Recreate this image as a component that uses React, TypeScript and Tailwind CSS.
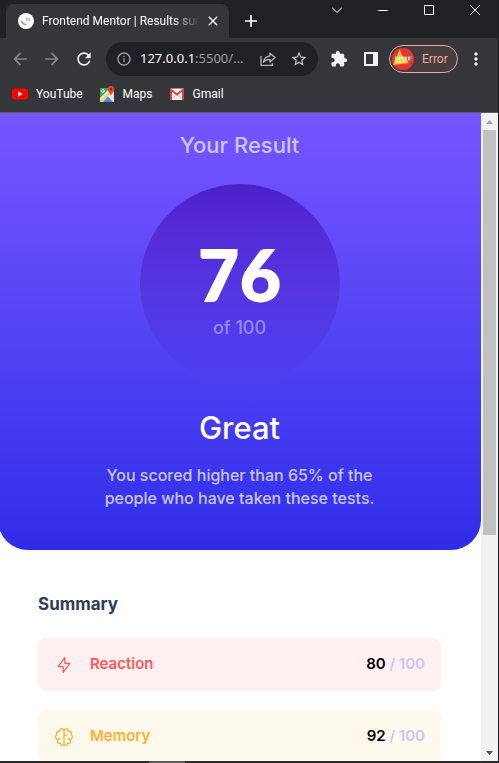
import type { ReactNode } from "react";
import {
  MdAdd,
  MdArrowBack,
  MdArrowForward,
  MdClose,
  MdExtension,
  MdInfoOutline,
  MdMoreVert,
  MdRefresh,
  MdStarBorder,
} from "react-icons/md";

function TabFavicon() {
  return (
    <svg viewBox="0 0 16 16" className="size-4 shrink-0" aria-hidden="true">
      <circle cx="8" cy="8" r="8" fill="#fff" />
      <path d="M3.500 7.500c.6 2.600 2.400 4 5 3.800" fill="none" stroke="#8d92c8" strokeWidth="1.200" />
      <path d="M8.500 4.500v3.600M12 5 9.500 6.500 12 8" fill="none" stroke="#8cc6d6" strokeWidth="1" />
    </svg>
  );
}

function WindowControls() {
  return (
    <div className="ml-auto flex h-5 text-white">
      <button aria-label="Search tabs" className="grid w-[46px] place-items-center">
        <svg viewBox="0 0 10 10" className="size-2.5" fill="none" stroke="currentColor">
          <path d="M0 2.500 5 7.500 10 2.500" />
        </svg>
      </button>
      <button aria-label="Minimize" className="grid w-[46px] place-items-center">
        <svg viewBox="0 0 10 10" className="size-2.5" fill="none" stroke="currentColor">
          <path d="M0 5.500h10" />
        </svg>
      </button>
      <button aria-label="Maximize" className="grid w-[46px] place-items-center">
        <svg viewBox="0 0 10 10" className="size-2.5" fill="none" stroke="currentColor">
          <path d="M.5.5h9v9h-9z" />
        </svg>
      </button>
      <button aria-label="Close window" className="grid w-[46px] place-items-center">
        <svg viewBox="0 0 10 10" className="size-2.5" fill="none" stroke="currentColor">
          <path d="m0 0 10 10M10 0 0 10" />
        </svg>
      </button>
    </div>
  );
}

function TabStrip() {
  return (
    <div className="flex h-[38px] bg-[#202124]">
      <div className="mt-1 ml-1.5 flex max-w-[223px] flex-1 items-center rounded-t-lg bg-[#35363a] pl-3 pr-2 text-white">
        <TabFavicon />
        <span className="ml-2 w-[160px] whitespace-nowrap [mask-image:linear-gradient(to_right,black_130px,transparent_158px)]">
          Frontend Mentor | Results sum
        </span>
        <button aria-label="Close tab" className="ml-auto">
          <MdClose className="size-4" />
        </button>
      </div>
      <button aria-label="New tab" className="ml-3 mt-1 text-white">
        <MdAdd className="size-5" />
      </button>
      <WindowControls />
    </div>
  );
}

function ShareIcon() {
  return (
    <svg viewBox="0 0 16 16" className="size-4" fill="none" stroke="currentColor" strokeWidth="1.300" aria-hidden="true">
      <path d="M1 5v9.400h11.500v-2.200" />
      <path d="M10 2.200 15 6.600 10 11V8.400C7.200 8.400 5 9.200 3.400 11.200 3.900 7.800 6.200 5.300 10 4.800Z" strokeLinejoin="round" />
    </svg>
  );
}

function ProfileBadge() {
  return (
    <svg viewBox="0 0 22 22" className="size-[22px]" aria-hidden="true">
      <circle cx="11" cy="11" r="11" fill="#e93434" />
      <path d="M7.500 1 10 7l5 5 2 3-16 2L3 11l2-3Z" fill="#f6c400" />
      <path d="M3 9.500h17M3 11.500h16" stroke="#fff" strokeWidth="1.300" strokeDasharray="2.400 .8" />
      <path d="M4 14h10" stroke="#fff" strokeWidth="1.500" strokeDasharray="2 .9" />
    </svg>
  );
}

function Toolbar() {
  return (
    <div className="flex h-[42px] items-center bg-[#35363a] pl-2.5 pr-3 text-[#f1f3f4]">
      <button aria-label="Back" className="text-[#87888b]">
        <MdArrowBack className="size-5" />
      </button>
      <button aria-label="Forward" className="ml-3 text-[#87888b]">
        <MdArrowForward className="size-5" />
      </button>
      <button aria-label="Reload" className="ml-3">
        <MdRefresh className="size-5" />
      </button>
      <div className="ml-3 flex h-[34px] flex-1 items-center rounded-full bg-[#202124] pl-2.5 pr-2.5 text-[#9aa0a6]">
        <MdInfoOutline className="size-4 shrink-0" />
        <button className="ml-2 flex-1 whitespace-nowrap text-left font-['Noto_Sans',sans-serif] text-[13px]" aria-label="Address 127.0.0.1:5500">
          <span className="text-white">127.0.0.1</span>:5500/...
        </button>
        <button aria-label="Share this page" className="text-[#b6b8bc]">
          <ShareIcon />
        </button>
        <button aria-label="Bookmark this page" className="ml-3.5 text-[#c4c6c9]">
          <MdStarBorder className="size-[18px]" />
        </button>
      </div>
      <button aria-label="Extensions" className="ml-3">
        <MdExtension className="size-[18px]" />
      </button>
      <button aria-label="Side panel" className="ml-4">
        <svg viewBox="0 0 14 14" className="size-3.5">
          <path d="M1 1h12v12H1Z" fill="none" stroke="currentColor" strokeWidth="2" />
          <path d="M9 0h5v14H9Z" fill="currentColor" />
        </svg>
      </button>
      <button className="ml-[11px] flex h-7 w-[69px] items-center rounded-full border border-[#f2a69f] bg-[#463d41] pl-0.5 text-[#f2a69f]">
        <ProfileBadge />
        <span className="ml-2">Error</span>
      </button>
      <button aria-label="Menu" className="ml-2">
        <MdMoreVert className="size-5" />
      </button>
    </div>
  );
}

function Bookmark({ icon, label }: { icon: ReactNode; label: string }) {
  return (
    <a href="#" className="flex items-center gap-2">
      {icon}
      {label}
    </a>
  );
}

function BookmarksBar() {
  return (
    <nav className="flex h-[33px] items-center gap-4 border-b border-[#5c5d60] bg-[#35363a] pb-1 pl-3 text-white">
      <Bookmark
        label="YouTube"
        icon={
          <svg viewBox="0 0 16 16" className="size-4">
            <rect y="2.500" width="16" height="11" rx="2.500" fill="#f00" />
            <path d="m6.300 5.600 4.400 2.400-4.400 2.400Z" fill="#fff" />
          </svg>
        }
      />
      <Bookmark
        label="Maps"
        icon={
          <svg viewBox="0 0 16 16" className="size-4">
            <path d="M1 2h11l3 4v10H1Z" fill="#e7e7e7" />
            <path d="M1 2h10L1 12Z" fill="#34a853" />
            <path d="M1 15 11 5l1.500 1.500L4 16H1Z" fill="#fbd04b" />
            <path d="m4 16 5-5.500 5 5.500Z" fill="#4285f4" />
            <path d="M12 0a3.300 3.300 0 0 0-3.300 3.300C8.700 5.700 11.500 7 12 10c.5-3 3.300-4.300 3.300-6.700A3.300 3.300 0 0 0 12 0Z" fill="#ea4335" />
            <circle cx="12" cy="3.300" r="1.200" fill="#8e1f19" />
            <circle cx="3.800" cy="5" r="1.400" fill="none" stroke="#fff" />
          </svg>
        }
      />
      <Bookmark
        label="Gmail"
        icon={
          <svg viewBox="0 0 16 16" className="size-4">
            <rect x="1" y="2.500" width="14" height="11.500" rx="1" fill="#eee" />
            <path d="m3 13 5-4.500L13 13" fill="none" stroke="#ccc" />
            <path d="M2 14V3.800l6 4.700 6-4.700V14" fill="none" stroke="#db4437" strokeWidth="2" />
          </svg>
        }
      />
    </nav>
  );
}

function ReactionIcon() {
  return (
    <svg viewBox="0 0 20 20" className="size-5" fill="none" stroke="currentColor" strokeWidth="1.250" strokeLinecap="round" strokeLinejoin="round">
      <path d="M10.833 8.333V2.500l-6.666 9.167h5V17.500l6.666-9.167h-5Z" />
    </svg>
  );
}

function MemoryIcon() {
  return (
    <svg viewBox="0 0 20 20" className="size-5" fill="none" stroke="currentColor" strokeWidth="1.250" strokeLinecap="round" strokeLinejoin="round">
      <path d="M5.833 11.667a2.500 2.500 0 1 0 .834 4.858" />
      <path d="M3.553 13.004a3.333 3.333 0 0 1-.728-5.530m.025-.067a2.083 2.083 0 0 1 2.983-2.824m.199.054A2.083 2.083 0 1 1 10 3.750v12.917a1.667 1.667 0 0 1-3.333 0M10 5.833a2.500 2.500 0 0 0 2.500 2.500m1.667 3.334a2.500 2.500 0 1 1-.834 4.858" />
      <path d="M16.447 13.004a3.334 3.334 0 0 0 .728-5.530m-.025-.067a2.083 2.083 0 0 0-2.983-2.824M10 3.750a2.085 2.085 0 0 1 2.538-2.033 2.084 2.084 0 0 1 1.430 2.920m-.635 12.030a1.667 1.667 0 0 1-3.333 0" />
    </svg>
  );
}

const scores = [
  { name: "Reaction", score: 80, icon: <ReactionIcon />, tint: "bg-[#fff1f2]", ink: "text-[#ff5757]" },
  { name: "Memory", score: 92, icon: <MemoryIcon />, tint: "bg-[#fff8ec]", ink: "text-[#ffb02e]" },
];

function ResultsPage() {
  return (
    <main className="-ml-0.5 min-w-0 flex-1 overflow-hidden bg-white font-[Inter,sans-serif]">
      <section className="flex flex-col items-center rounded-b-[30px] bg-linear-to-b from-[#7755ff] to-[#2f2ce9] px-10 pb-10 pt-4 text-center text-[#c8c7ff]">
        <h1 className="text-[22px] font-medium leading-8">Your Result</h1>
        <div className="mt-[23px] flex size-[200px] flex-col items-center justify-center rounded-full bg-linear-to-b from-[#4d21c9] to-[#2521c900] pt-0.5">
          <p className="font-[Lato,sans-serif] text-[72px] font-extrabold leading-[86px] text-white">76</p>
          <p className="text-lg font-medium leading-[22px] text-[#9189f0]">of 100</p>
        </div>
        <h2 className="mt-6 text-[31px] font-medium leading-10 text-white">Great</h2>
        <p className="mt-4 max-w-[300px] text-base font-medium leading-[23px]">
          You scored higher than 65% of the people who have taken these tests.
        </p>
      </section>
      <section className="px-10 pt-10">
        <h2 className="text-[17px] font-bold leading-7 text-[#303b5a]">Summary</h2>
        <ul className="mt-5 flex flex-col gap-[19px]">
          {scores.map((item) => (
            <li key={item.name} className={`flex h-[53px] items-center rounded-lg px-4 text-[15px] font-semibold ${item.tint}`}>
              <span className={`flex items-center gap-4 ${item.ink}`}>
                {item.icon}
                {item.name}
              </span>
              <span className="ml-auto text-[#c8c7ff]">
                <span className="text-black">{item.score}</span> / 100
              </span>
            </li>
          ))}
        </ul>
      </section>
    </main>
  );
}

function Scrollbar() {
  return (
    <div className="flex w-[17px] shrink-0 flex-col items-center bg-[#f1f1f1]">
      <button aria-label="Scroll up" className="grid h-[17px] w-full place-items-center">
        <svg viewBox="0 0 7 4" className="h-1 w-[7px]">
          <path d="M3.500 0 7 4H0Z" fill="#a3a3a3" />
        </svg>
      </button>
      <div className="flex w-[13px] flex-1 flex-col">
        <div className="h-[66%] bg-[#c1c1c1]" />
      </div>
      <button aria-label="Scroll down" className="grid h-[17px] w-full place-items-center">
        <svg viewBox="0 0 7 4" className="h-1 w-[7px]">
          <path d="M0 0h7L3.500 4Z" fill="#505050" />
        </svg>
      </button>
    </div>
  );
}

export default function App() {
  return (
    <div className="flex h-screen flex-col overflow-hidden border-r border-[#1b1c20] font-[Roboto,sans-serif] text-xs">
      <TabStrip />
      <Toolbar />
      <BookmarksBar />
      <div className="flex min-h-0 flex-1 text-base">
        <ResultsPage />
        <Scrollbar />
      </div>
      <div className="flex h-0.5 shrink-0 bg-[#2b292a]">
        <div className="ml-[149px] w-9 bg-[#5c5a5b]" />
      </div>
    </div>
  );
}
